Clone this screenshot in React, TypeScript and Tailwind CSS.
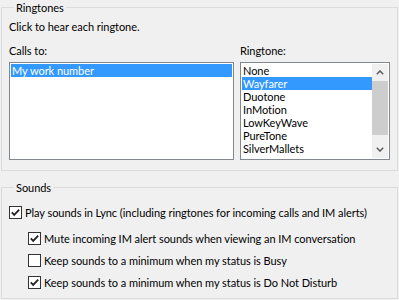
const ringtones = ['None', 'Wayfarer', 'Duotone', 'InMotion', 'LowKeyWave', 'PureTone', 'SilverMallets', 'Synergy'];

function CheckBox({ checked }: { checked: boolean }) {
  return (
    <svg width="13" height="13" viewBox="0 0 13 13" className="shrink-0">
      <rect x="0.5" y="0.5" width="12" height="12" fill="#ffffff" stroke="#333333" />
      {checked && (
        <polyline points="2.8,6.4 5.2,8.9 10.2,3.6" fill="none" stroke="#222222" strokeWidth="1.8" />
      )}
    </svg>
  );
}

function Option({ checked, label, indent }: { checked: boolean; label: string; indent?: boolean }) {
  return (
    <div className={indent ? 'flex h-[13px] items-center pl-[19px]' : 'flex h-[13px] items-center'}>
      <CheckBox checked={checked} />
      <span className="ml-[3px] whitespace-nowrap">{label}</span>
    </div>
  );
}

function Chevron({ down }: { down?: boolean }) {
  return (
    <svg width="8" height="5" viewBox="0 0 8 5">
      <polyline
        points={down ? '0.8,0.8 4,4 7.2,0.8' : '0.8,4.2 4,1 7.2,4.2'}
        fill="none"
        stroke="#606060"
        strokeWidth="1.6"
      />
    </svg>
  );
}

export default function App() {
  return (
    <div className="w-[399px] h-[300px] bg-[#f0f0f0] text-black font-['Lato',sans-serif] text-[11px] leading-[13px] tracking-[-0.05px] overflow-hidden">
      {/* Ringtones */}
      <fieldset className="ml-[1px] w-[397px] border border-[#dcdcdc] pl-[7px] pb-[10px]">
        <legend className="ml-[5px] px-[2px] leading-[15px]">Ringtones</legend>
        <div className="mt-[5px]">Click to hear each ringtone.</div>
        <div className="mt-[11px] flex gap-[6px]">
          <div className="w-[225px]">
            <div>Calls to:</div>
            <div className="mt-[5px] h-[98px] border border-[#828790] bg-white p-[1px]">
              <div className="bg-[#3399ff] pl-[1px] text-white">My work number</div>
            </div>
          </div>
          <div className="w-[150px]">
            <div>Ringtone:</div>
            <div className="mt-[5px] flex h-[98px] border border-[#828790] bg-white p-[1px]">
              <div className="flex-1 overflow-hidden">
                {ringtones.map((r) => (
                  <div key={r} className={r === 'Wayfarer' ? 'bg-[#3399ff] pl-[1px] text-white' : 'pl-[1px]'}>
                    {r}
                  </div>
                ))}
              </div>
              <div className="flex w-[16px] flex-col bg-[#f0f0f0]">
                <div className="flex h-[17px] items-center justify-center">
                  <Chevron />
                </div>
                <div className="h-[54px] bg-[#cdcdcd]" />
                <div className="h-[6px]" />
                <div className="flex h-[17px] items-center justify-center">
                  <Chevron down />
                </div>
              </div>
            </div>
          </div>
        </div>
      </fieldset>

      {/* Sounds */}
      <fieldset className="mt-[9px] ml-[1px] w-[397px] border border-[#dcdcdc] pl-[7px] pb-[9px]">
        <legend className="ml-[5px] px-[2px] leading-[15px]">Sounds</legend>
        <div className="mt-[11px]">
          <Option checked label="Play sounds in Lync (including ringtones for incoming calls and IM alerts)" />
        </div>
        <div className="mt-[13px]">
          <Option checked indent label="Mute incoming IM alert sounds when viewing an IM conversation" />
        </div>
        <div className="mt-[9px]">
          <Option checked={false} indent label="Keep sounds to a minimum when my status is Busy" />
        </div>
        <div className="mt-[9px]">
          <Option checked indent label="Keep sounds to a minimum when my status is Do Not Disturb" />
        </div>
      </fieldset>
    </div>
  );
}
